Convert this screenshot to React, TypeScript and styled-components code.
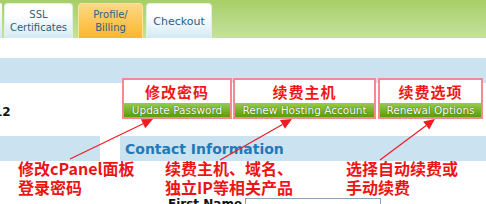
import React from "react";
import styled, { createGlobalStyle } from "styled-components";

const GlobalStyle = createGlobalStyle`
  html, body {
    margin: 0;
    padding: 0;
    background: #ffffff;
  }
  body {
    font-family: "DejaVu Sans", Verdana, sans-serif;
  }
`;

const Page = styled.div`
  position: relative;
  width: 486px;
  height: 204px;
  overflow: hidden;
  background: #ffffff;
`;

/* 顶部标签栏 */
const TabBar = styled.div`
  display: flex;
  align-items: flex-end;
  height: 38px;
  background: linear-gradient(#a7cf66, #c4e29e);
`;

const TabEdge = styled.div`
  width: 2px;
  height: 35px;
  margin-right: 2px;
  background: linear-gradient(#ffffff, #d4eaf4);
  border-top-right-radius: 4px;
`;

const Tab = styled.div<{ $active?: boolean; $width: number; $gap: number }>`
  display: flex;
  align-items: center;
  justify-content: center;
  box-sizing: border-box;
  width: ${(p) => p.$width}px;
  height: 35px;
  margin-right: ${(p) => p.$gap}px;
  border: 1px solid ${(p) => (p.$active ? "#fbe39c" : "#e2f0e0")};
  border-bottom: 0;
  border-radius: 4px 4px 0 0;
  background: ${(p) =>
    p.$active
      ? "linear-gradient(#fdd886, #fbb62a)"
      : "linear-gradient(#ffffff 30%, #d4eaf4)"};
  color: #2d5f80;
  font-size: ${(p) => (p.$width === 66 ? 11 : 10)}px;
  line-height: 13px;
  text-align: center;
`;

const Spacer = styled.div<{ $h: number }>`
  height: ${(p) => p.$h}px;
`;

const Band = styled.div`
  height: 25px;
  background: #cbe2f0;
`;

/* 操作按钮行 */
const ActionRow = styled.div`
  display: flex;
  align-items: flex-start;
  height: 58px;
  margin-top: -5px;
`;

const RowLabel = styled.div`
  width: 122px;
  padding-top: 27px;
  margin-left: -6px;
  font-size: 12px;
  font-weight: bold;
  color: #111111;
  white-space: nowrap;
  overflow: hidden;
`;

const ActionBox = styled.div<{ $width: number; $gap: number }>`
  display: flex;
  flex-direction: column;
  box-sizing: border-box;
  width: ${(p) => p.$width}px;
  height: 41px;
  margin-left: ${(p) => p.$gap}px;
  border: 2px solid rgba(236, 90, 96, 0.7);
  background: #ffffff;
`;

const ActionTitle = styled.div`
  height: 23px;
  display: flex;
  align-items: center;
  justify-content: center;
  color: #f01818;
  font-family: "Noto Sans CJK SC", sans-serif;
  font-weight: bold;
  font-size: 15px;
  letter-spacing: 1px;
`;

const GreenButton = styled.div`
  height: 14px;
  display: flex;
  align-items: center;
  justify-content: center;
  background: linear-gradient(#96cd4a, #5c9c0c);
  color: #ffffff;
  font-size: 10.5px;
  text-shadow: 0 0 1px #3d6a08, 0 0 1px #3d6a08;
  white-space: nowrap;
`;

/* 联系信息标题行 */
const SectionRow = styled.div`
  display: flex;
  gap: 20px;
  height: 25px;
`;

const SectionStub = styled.div`
  width: 100px;
  background: #cbe2f0;
`;

const SectionTitle = styled.div`
  flex: 1;
  display: flex;
  align-items: center;
  padding-left: 5px;
  background: #cbe2f0;
  color: #1f7ab5;
  font-size: 14px;
  font-weight: bold;
`;

/* 说明文字 */
const Notes = styled.div`
  display: grid;
  grid-template-columns: 147px 181px 1fr;
  padding-left: 18px;
  margin-top: -2px;
  height: 38px;
`;

const Note = styled.div`
  color: #ee1414;
  font-family: "Noto Sans CJK SC", sans-serif;
  font-weight: bold;
  font-size: 16px;
  line-height: 19px;
  white-space: nowrap;
`;

const FormRow = styled.div`
  display: flex;
  align-items: flex-start;
  padding-left: 168px;
  gap: 12px;
`;

const FieldLabel = styled.div`
  width: 65px;
  font-size: 12px;
  font-weight: bold;
  color: #111111;
  white-space: nowrap;
`;

const TextInput = styled.div`
  box-sizing: border-box;
  width: 136px;
  height: 20px;
  margin-top: 1px;
  border: 1px solid #8aa3bb;
`;

const Arrows = styled.svg`
  position: absolute;
  left: 0;
  top: 0;
  pointer-events: none;
`;

const arrows = [
  { x1: 70, y1: 159, x2: 153, y2: 119 },
  { x1: 220, y1: 160, x2: 292, y2: 119 },
  { x1: 380, y1: 160, x2: 435, y2: 119 },
];

const ArrowLayer: React.FC = () => {
  return (
    <Arrows width={486} height={204}>
      {arrows.map((a, i) => {
        const ang = Math.atan2(a.y2 - a.y1, a.x2 - a.x1);
        const len = 11;
        const w = 5;
        const bx = a.x2 - len * Math.cos(ang);
        const by = a.y2 - len * Math.sin(ang);
        const px = -Math.sin(ang) * w;
        const py = Math.cos(ang) * w;
        return (
          <g key={i}>
            <line
              x1={a.x1}
              y1={a.y1}
              x2={bx}
              y2={by}
              stroke="#ee1c24"
              strokeWidth={1.2}
            />
            <polygon
              points={`${a.x2},${a.y2} ${bx + px},${by + py} ${bx - px},${by - py}`}
              fill="#ee1c24"
            />
          </g>
        );
      })}
    </Arrows>
  );
};

const App: React.FC = () => {
  return (
    <Page>
      <GlobalStyle />
      <TabBar>
        <TabEdge />
        <Tab $width={69} $gap={5}>
          SSL
          <br />
          Certificates
        </Tab>
        <Tab $width={65} $gap={3} $active>
          Profile/
          <br />
          Billing
        </Tab>
        <Tab $width={66} $gap={0}>
          Checkout
        </Tab>
      </TabBar>
      <Spacer $h={20} />
      <Band />
      <ActionRow>
        <RowLabel>12</RowLabel>
        <ActionBox $width={110} $gap={6}>
          <ActionTitle>修改密码</ActionTitle>
          <GreenButton>Update Password</GreenButton>
        </ActionBox>
        <ActionBox $width={143} $gap={1}>
          <ActionTitle>续费主机</ActionTitle>
          <GreenButton>Renew Hosting Account</GreenButton>
        </ActionBox>
        <ActionBox $width={105} $gap={2}>
          <ActionTitle>续费选项</ActionTitle>
          <GreenButton>Renewal Options</GreenButton>
        </ActionBox>
      </ActionRow>
      <SectionRow>
        <SectionStub />
        <SectionTitle>Contact Information</SectionTitle>
      </SectionRow>
      <Notes>
        <Note>
          修改cPanel面板
          <br />
          登录密码
        </Note>
        <Note>
          续费主机、域名、
          <br />
          独立IP等相关产品
        </Note>
        <Note>
          选择自动续费或
          <br />
          手动续费
        </Note>
      </Notes>
      <FormRow>
        <FieldLabel>First Name</FieldLabel>
        <TextInput />
      </FormRow>
      <ArrowLayer />
    </Page>
  );
};

export default App;
